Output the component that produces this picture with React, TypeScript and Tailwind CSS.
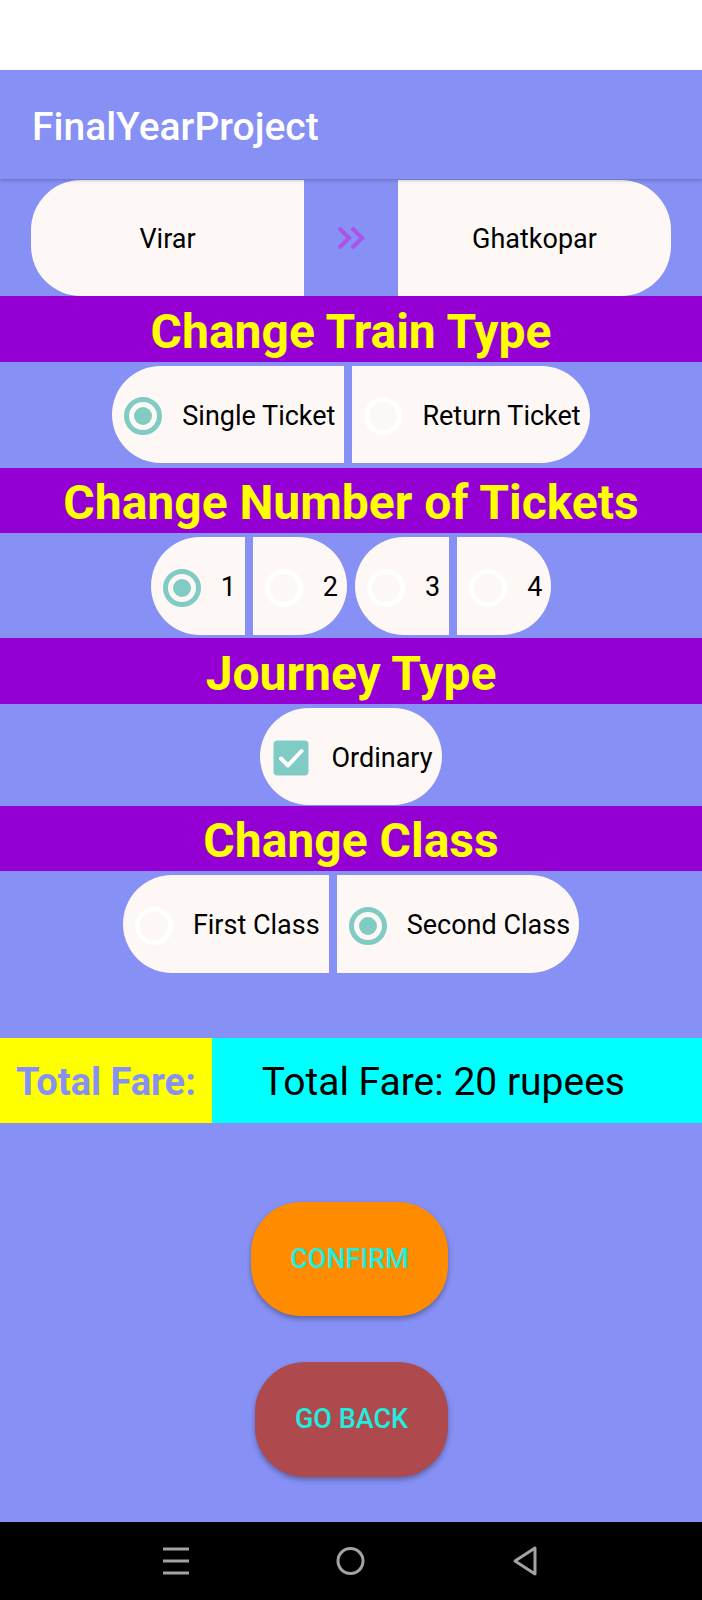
import React from 'react';

const PILL = 'bg-[#fdf8f6] flex items-center h-full';

const Radio: React.FC<{ on?: boolean }> = ({ on }) => (
  <svg width="38" height="38" viewBox="0 0 38 38" className="shrink-0">
    <circle cx="19" cy="19" r="16.5" fill="none" stroke={on ? '#80cbc4' : '#ffffff'} strokeWidth="5" />
    {on && <circle cx="19" cy="19" r="9" fill="#80cbc4" />}
  </svg>
);

const Check: React.FC = () => (
  <svg width="36" height="36" viewBox="0 0 36 36" className="shrink-0">
    <rect x="0.5" y="0.5" width="35" height="35" rx="4" fill="#80cbc4" />
    <path d="M8 18.5 L15 25.5 L28.5 11" fill="none" stroke="#ffffff" strokeWidth="4" strokeLinecap="round" strokeLinejoin="round" />
  </svg>
);

const Heading: React.FC<{ title: string; h: string }> = ({ title, h }) => (
  <div className={`${h} bg-[#9400d3] flex items-center justify-center pt-[5px] text-[#ffff00] text-[48px] font-bold leading-none`}>
    {title}
  </div>
);

const Option: React.FC<{ label: string; on?: boolean; side: 'l' | 'r' | 'both' }> = ({ label, on, side }) => {
  const round = side === 'l' ? 'rounded-l-full' : side === 'r' ? 'rounded-r-full' : 'rounded-full';
  return (
    <div className={`${PILL} ${round} pl-[12px] pr-[9px] pt-[3px] gap-[20px]`}>
      <Radio on={on} />
      <span className="text-[27px] text-black whitespace-nowrap">{label}</span>
    </div>
  );
};

export default function App() {
  return (
    <div className="w-[702px] h-[1600px] flex flex-col bg-[#8690f5] font-['Roboto',sans-serif]">
      <div className="h-[70px] bg-white" />

      {/* toolbar */}
      <header className="h-[109px] flex items-center pl-[32px] pt-[5px] text-white text-[39px] font-medium shadow-[0_2px_3px_rgba(0,0,0,0.18)] relative z-10">
        FinalYearProject
      </header>

      {/* stations */}
      <div className="mt-[1px] h-[116px] flex items-stretch px-[31px]">
        <div className={`${PILL} w-[273px] rounded-l-[50px] justify-center pt-[3px] text-[27px] text-black`}>Virar</div>
        <div className="flex-1 flex items-center justify-center">
          <svg width="28" height="24" viewBox="0 0 28 24">
            <path d="M2 2 L12 12 L2 22 M15 2 L25 12 L15 22" fill="none" stroke="#ad52e6" strokeWidth="4" strokeLinejoin="miter" />
          </svg>
        </div>
        <div className={`${PILL} w-[273px] rounded-r-[50px] justify-center pt-[3px] text-[27px] text-black`}>Ghatkopar</div>
      </div>

      <Heading title="Change Train Type" h="h-[66px]" />
      <div className="mt-[4px] h-[97px] flex justify-center gap-[8px]">
        <Option label="Single Ticket" on side="l" />
        <Option label="Return Ticket" side="r" />
      </div>

      <div className="mt-[5px]">
        <Heading title="Change Number of Tickets" h="h-[65px]" />
      </div>
      <div className="mt-[4px] h-[98px] flex justify-center gap-[8px]">
        <Option label="1" on side="l" />
        <Option label="2" side="r" />
        <Option label="3" side="l" />
        <Option label="4" side="r" />
      </div>

      <div className="mt-[3px]">
        <Heading title="Journey Type" h="h-[66px]" />
      </div>
      <div className="mt-[4px] h-[97px] flex justify-center">
        <div className={`${PILL} rounded-full pl-[13px] pr-[9px] pt-[3px] gap-[22px]`}>
          <Check />
          <span className="text-[27px] text-black">Ordinary</span>
        </div>
      </div>

      <div className="mt-[1px]">
        <Heading title="Change Class" h="h-[65px]" />
      </div>
      <div className="mt-[4px] h-[98px] flex justify-center gap-[8px]">
        <Option label="First Class" side="l" />
        <Option label="Second Class" on side="r" />
      </div>

      {/* fare */}
      <div className="mt-[65px] h-[85px] flex">
        <div className="bg-[#ffff00] flex items-center px-[16px] pt-[3px] text-[38px] font-bold text-[#8690f5] whitespace-nowrap">
          Total Fare:
        </div>
        <div className="flex-1 bg-[#00ffff] flex items-center pl-[50px] pt-[3px] text-[39px] text-black whitespace-nowrap">
          Total Fare: 20 rupees
        </div>
      </div>

      <button className="mt-[79px] ml-[251px] h-[114px] w-[197px] rounded-[50px] bg-[#ff8c00] text-[#20ecdf] text-[27px] font-medium shadow-[0_3px_5px_rgba(0,0,0,0.3)]">
        CONFIRM
      </button>
      <button className="mt-[46px] ml-[255px] h-[115px] w-[193px] rounded-[50px] bg-[#ae4a4e] text-[#20ecdf] text-[27px] font-medium shadow-[0_3px_5px_rgba(0,0,0,0.3)]">
        GO BACK
      </button>

      <div className="flex-1" />

      {/* nav bar */}
      <nav className="h-[78px] bg-black flex items-center">
        <svg width="702" height="78" viewBox="0 0 702 78">
          <g stroke="#a3a3a3" strokeWidth="3" fill="none" strokeLinecap="butt">
            <path d="M163 27 H189 M163 39 H189 M163 51 H189" />
            <circle cx="350.5" cy="39" r="12.5" />
            <path d="M535 26 L515 39 L535 52 Z" strokeLinejoin="round" strokeLinecap="round" />
          </g>
        </svg>
      </nav>
    </div>
  );
}
